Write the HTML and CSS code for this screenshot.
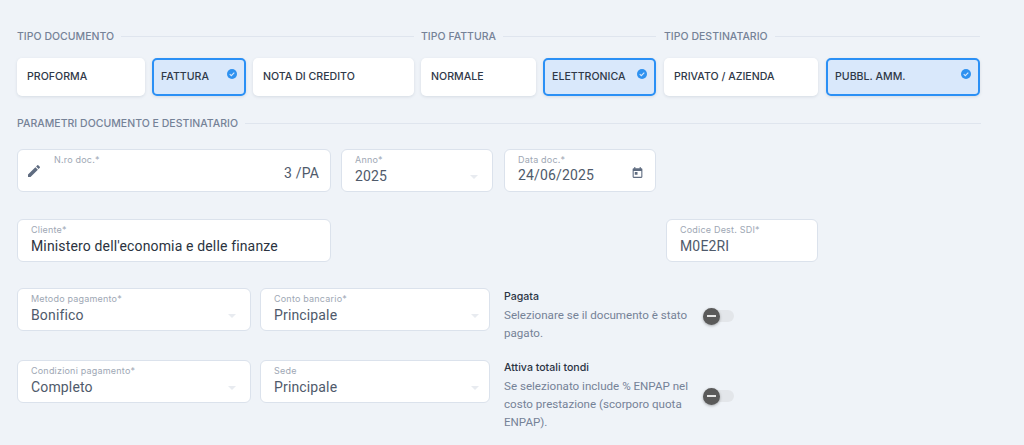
FILE: index.html
```html
<!DOCTYPE html>
<html lang="it">
<head>
<meta charset="utf-8">
<title>Documento</title>
<link rel="stylesheet" href="styles.css">
</head>
<body>
<main class="page">
  <div class="types">
    <section class="group g-doc">
      <h2 class="sec"><span>TIPO DOCUMENTO</span></h2>
      <div class="opts">
        <div class="opt w-proforma">PROFORMA</div>
        <div class="opt on w-fattura">FATTURA<svg class="chk" viewBox="0 0 24 24"><circle cx="12" cy="12" r="12" fill="#2f92f0"/><path d="M6.5 12.5l3.8 3.6 7.2-7.4" fill="none" stroke="#d9e8fb" stroke-width="2.6"/></svg></div>
        <div class="opt w-nota">NOTA DI CREDITO</div>
      </div>
    </section>
    <section class="group g-fatt">
      <h2 class="sec"><span>TIPO FATTURA</span></h2>
      <div class="opts">
        <div class="opt w-normale">NORMALE</div>
        <div class="opt on w-elettr">ELETTRONICA<svg class="chk" viewBox="0 0 24 24"><circle cx="12" cy="12" r="12" fill="#2f92f0"/><path d="M6.5 12.5l3.8 3.6 7.2-7.4" fill="none" stroke="#d9e8fb" stroke-width="2.6"/></svg></div>
      </div>
    </section>
    <section class="group g-dest">
      <h2 class="sec"><span>TIPO DESTINATARIO</span></h2>
      <div class="opts">
        <div class="opt w-priv">PRIVATO / AZIENDA</div>
        <div class="opt on w-pubbl">PUBBL. AMM.<svg class="chk" viewBox="0 0 24 24"><circle cx="12" cy="12" r="12" fill="#2f92f0"/><path d="M6.5 12.5l3.8 3.6 7.2-7.4" fill="none" stroke="#d9e8fb" stroke-width="2.6"/></svg></div>
      </div>
    </section>
  </div>

  <h2 class="sec sec-params"><span>PARAMETRI DOCUMENTO E DESTINATARIO</span></h2>

  <div class="row row-1">
    <div class="field w-314 nro">
      <svg class="pencil" viewBox="0 0 24 24"><path fill="#5f6c80" d="M3 17.25V21h3.75L17.81 9.94l-3.75-3.75L3 17.25zM20.71 7.04a1 1 0 0 0 0-1.41l-2.34-2.34a1 1 0 0 0-1.41 0l-1.83 1.83 3.75 3.75 1.83-1.83z"/></svg>
      <label class="lab">N.ro doc.*</label>
      <div class="val num">3 /PA</div>
    </div>
    <div class="field w-152"><label class="lab">Anno*</label><div class="val">2025</div><i class="caret"></i></div>
    <div class="field w-152 date">
      <label class="lab">Data doc.*</label><div class="val up">24/06/2025</div>
      <svg class="cal" viewBox="0 0 24 24"><path fill="#5f6c80" d="M19 4h-1V2h-2v2H8V2H6v2H5a2 2 0 0 0-2 2v14a2 2 0 0 0 2 2h14a2 2 0 0 0 2-2V6a2 2 0 0 0-2-2zm0 16H5V9h14v11zM7 11h5v5H7z"/></svg>
    </div>
  </div>

  <div class="row row-2">
    <div class="field w-314"><label class="lab">Cliente*</label><div class="val dark">Ministero dell'economia e delle finanze</div></div>
    <div class="field w-152"><label class="lab">Codice Dest. SDI*</label><div class="val">M0E2RI</div></div>
  </div>

  <div class="row row-3">
    <div class="field w-234"><label class="lab">Metodo pagamento*</label><div class="val">Bonifico</div><i class="caret"></i></div>
    <div class="field w-230"><label class="lab">Conto bancario*</label><div class="val">Principale</div><i class="caret"></i></div>
    <div class="toggle-box">
      <div class="t-text"><h3>Pagata</h3><p>Selezionare se il documento è stato pagato.</p></div>
      <div class="switch"><b class="knob"></b></div>
    </div>
  </div>

  <div class="row row-4">
    <div class="field w-234"><label class="lab">Condizioni pagamento*</label><div class="val">Completo</div><i class="caret"></i></div>
    <div class="field w-230"><label class="lab">Sede</label><div class="val">Principale</div><i class="caret"></i></div>
    <div class="toggle-box">
      <div class="t-text"><h3>Attiva totali tondi</h3><p>Se selezionato include % ENPAP nel costo prestazione (scorporo quota ENPAP).</p></div>
      <div class="switch"><b class="knob"></b></div>
    </div>
  </div>
</main>
</body>
</html>
```
FILE: styles.css
```css
* { box-sizing: border-box; }
html, body { margin: 0; height: 445px; overflow: hidden; }
body { background: #eff3f8; font-family: Inter, "Liberation Sans", sans-serif; color: #2b3444; }
.page { width: 981px; padding: 29px 0 0 17px; }
.types { display: flex; gap: 7px; }
.g-doc { width: 397px; }
.g-fatt { width: 235px; }
.g-dest { width: 316px; margin-left: 1px; }
.sec { display: flex; margin: 0; height: 14px; font-size: 10.5px; line-height: 14px; font-weight: 500; letter-spacing: .02px; color: #758297; white-space: nowrap; }
.sec span { padding-top: 1px; }
.sec::after { content: ""; flex: 1; align-self: center; height: 1px; background: #dfe5ee; margin-left: 7px; }
.opts { display: flex; gap: 7px; margin-top: 15px; }
.g-dest .opts { gap: 8px; }
.opt { position: relative; height: 38px; padding: 0 10px 1px; display: flex; align-items: center; background: #fff; border-radius: 5px; font-size: 10.6px; font-weight: 550; color: #2f3848; box-shadow: 0 1px 3px rgba(100,116,139,.18); white-space: nowrap; }
.opt.on { background: #d9e8fb; border: 2px solid #2b90f5; padding: 0 7px 1px; }
.chk { position: absolute; top: 9px; right: 7px; width: 10px; height: 10px; }
.w-proforma { width: 128px; }
.w-fattura { width: 94px; }
.w-nota { width: 161px; }
.w-normale { width: 115px; }
.w-elettr { width: 113px; }
.w-priv { width: 154px; }
.w-pubbl { width: 154px; }
.sec-params { margin-top: 20px; width: 964px; }
.row { display: flex; height: 43px; }
.row-1 { margin-top: 19px; gap: 10px; }
.row-2 { margin-top: 27px; gap: 335px; }
.row-3 { margin-top: 26px; gap: 9px; }
.row-4 { margin-top: 29px; gap: 9px; }
.field { position: relative; height: 43px; padding: 4px 13px 0; background: #fff; border: 1px solid #dbe2ec; border-radius: 6px; }
.w-314 { width: 314px; }
.w-152 { width: 152px; }
.w-234 { width: 234px; }
.w-230 { width: 230px; }
.date { margin-left: 1px; }
.lab { display: block; font-size: 9px; line-height: 11px; letter-spacing: .2px; color: #9ea7b4; white-space: nowrap; }
.val { margin-top: 1px; font-family: Roboto, "Liberation Sans", sans-serif; font-size: 14px; line-height: 20px; letter-spacing: .15px; color: #4f5a6b; white-space: nowrap; }
.val.dark { color: #2b3340; }
.val.up { margin-top: 0; }
.caret { position: absolute; right: 14px; top: 25px; width: 0; height: 0; border-left: 4px solid transparent; border-right: 4px solid transparent; border-top: 4px solid #e8ebf0; }
.w-230 .caret { right: 10px; }
.nro { padding-left: 36px; }
.nro .val.num { margin-top: -2px; margin-right: -2px; text-align: right; }
.pencil { position: absolute; left: 8px; top: 13px; width: 16px; height: 16px; }
.cal { position: absolute; right: 11px; top: 16px; width: 13px; height: 13px; }
.toggle-box { width: 232px; margin-left: 5px; align-self: flex-start; display: flex; align-items: center; gap: 14px; }
.t-text { width: 186px; flex: none; }
.t-text h3 { margin: 0; font-size: 10.6px; line-height: 16px; font-weight: 500; color: #2b3444; }
.t-text p { margin: 1px 0 0; font-family: Roboto, "Liberation Sans", sans-serif; font-size: 11.6px; line-height: 18px; color: #758297; }
.row-3 .toggle-box { margin-top: 1px; }
.switch { position: relative; width: 27px; height: 12px; margin-left: 3px; border-radius: 6px; background: #e3e6ea; }
.knob { position: absolute; left: -4px; top: -2px; width: 17px; height: 17px; border-radius: 50%; background: #5a5a5a; box-shadow: 0 1px 3px rgba(0,0,0,.3); }
.knob::after { content: ""; position: absolute; left: 4px; top: 7px; width: 9px; height: 2px; background: #e6e6e6; }
```
